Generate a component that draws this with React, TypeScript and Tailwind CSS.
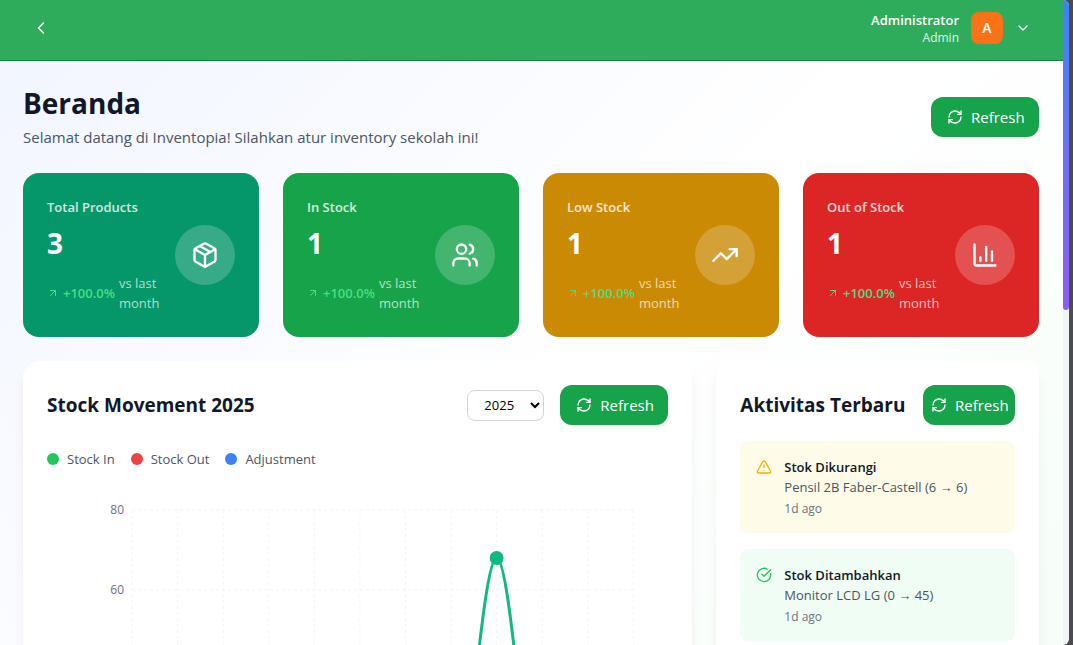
import React from "react";
import {
  ArrowUpRight,
  ChartColumn,
  ChevronDown,
  ChevronLeft,
  CircleCheckBig,
  Package,
  RefreshCw,
  TrendingUp,
  TriangleAlert,
  Users,
} from "lucide-react";

const stats = [
  { label: "Total Products", value: "3", color: "bg-[#059669]", Icon: Package },
  { label: "In Stock", value: "1", color: "bg-[#16a34a]", Icon: Users },
  { label: "Low Stock", value: "1", color: "bg-[#ca8a04]", Icon: TrendingUp },
  { label: "Out of Stock", value: "1", color: "bg-[#dc2626]", Icon: ChartColumn },
];

const legend = [
  { label: "Stock In", color: "bg-[#22c55e]" },
  { label: "Stock Out", color: "bg-[#ef4444]" },
  { label: "Adjustment", color: "bg-[#3b82f6]" },
];

const activities = [
  {
    title: "Stok Dikurangi",
    detail: "Pensil 2B Faber-Castell (6 → 6)",
    time: "1d ago",
    box: "bg-[#fefce8]",
    tint: "text-[#eab308]",
    Icon: TriangleAlert,
  },
  {
    title: "Stok Ditambahkan",
    detail: "Monitor LCD LG (0 → 45)",
    time: "1d ago",
    box: "bg-[#f0fdf4]",
    tint: "text-[#22c55e]",
    Icon: CircleCheckBig,
  },
];

function RefreshButton({ compact = false }: { compact?: boolean }) {
  return (
    <button
      type="button"
      className={`flex h-10 shrink-0 items-center gap-2 rounded-xl bg-[#16a34a] text-[15px] text-white ${
        compact ? "w-[92px] pl-2" : "w-[108px] pl-4"
      }`}
    >
      <RefreshCw className="size-4 shrink-0" />
      Refresh
    </button>
  );
}

function StockChart() {
  const months = Array.from({ length: 12 }, (_, i) => 85 + i * 45.55);
  const gridValues = [80, 60, 40, 20, 0];
  const labels = [80, 60];
  const y = (v: number) => 337 - v * 4;
  return (
    <svg viewBox="0 0 621 370" className="w-full" role="img" aria-label="Stock Movement">
      <g stroke="#f3f4f6" strokeDasharray="3 3">
        {gridValues.map((t) => (
          <line key={t} x1={85} x2={586} y1={y(t)} y2={y(t)} />
        ))}
        {months.map((x) => (
          <line key={x} x1={x} x2={x} y1={17} y2={337} />
        ))}
      </g>
      <g fill="#6b7280" fontSize={12} textAnchor="end">
        {labels.map((t) => (
          <text key={t} x={77} y={y(t) + 4}>
            {t}
          </text>
        ))}
      </g>
      <path
        d="M85 337H403.9C419 337 434.2 65 449.4 65C464.6 65 479.8 337 495 337H586"
        fill="none"
        stroke="#10b981"
        strokeWidth={3}
      />
      <circle cx={449.4} cy={65} r={7} fill="#10b981" />
    </svg>
  );
}

export default function App() {
  return (
    <div className="flex h-screen overflow-hidden bg-[#4b4c50] font-['Open_Sans','Noto_Sans',sans-serif] text-[#111827]">
      <div className="flex min-w-0 flex-1 overflow-hidden rounded-r-md bg-[#f1f5f9]">
        <div className="flex min-w-0 flex-1 flex-col overflow-hidden bg-[linear-gradient(135deg,#f1f5ff_0%,#ffffff_55%,#f0fdf4_130%)]">
          <header className="flex h-[61px] shrink-0 items-center justify-between border-b border-[#15803d] bg-[#2eac5c] pr-8 pl-[31px] text-white">
            <button type="button" aria-label="Back" className="-mt-1">
              <ChevronLeft className="size-5" />
            </button>
            <button type="button" className="-mt-1 flex items-center gap-3">
              <span className="flex flex-col items-end">
                <span className="text-[13px] leading-5 font-semibold">Administrator</span>
                <span className="text-xs leading-4 text-[#dcfce7]">Admin</span>
              </span>
              <span className="flex size-8 items-center justify-center rounded-lg bg-[#f97316] text-sm font-semibold">
                A
              </span>
              <ChevronDown className="size-4" />
            </button>
          </header>

          <main className="flex flex-col gap-6 pt-6 pr-6 pl-[23px]">
            <div className="flex items-center justify-between">
              <div>
                <h1 className="text-[28px] leading-9 font-bold">Beranda</h1>
                <p className="mt-1 text-[15px] leading-6 text-[#4b5563]">
                  Selamat datang di Inventopia! Silahkan atur inventory sekolah ini!
                </p>
              </div>
              <RefreshButton />
            </div>

            <section className="grid grid-cols-4 gap-6">
              {stats.map(({ label, value, color, Icon }) => (
                <article
                  key={label}
                  className={`flex items-center justify-between rounded-2xl p-6 text-white ${color}`}
                >
                  <div className="min-w-0">
                    <p className="text-[13px] leading-5 font-semibold text-white/80">{label}</p>
                    <p className="mt-2 text-[28px] leading-9 font-bold">{value}</p>
                    <div className="mt-3 flex items-center gap-1 text-[13px] leading-5">
                      <ArrowUpRight className="size-3 shrink-0 text-[#4ade80]" />
                      <span className="font-semibold text-[#4ade80]">+100.0%</span>
                      <span className="text-white/70">vs last month</span>
                    </div>
                  </div>
                  <div className="flex size-[60px] shrink-0 items-center justify-center rounded-full bg-white/20">
                    <Icon className="size-7" />
                  </div>
                </article>
              ))}
            </section>

            <div className="grid grid-cols-3 gap-6">
              <section className="col-span-2 rounded-2xl bg-white p-6 shadow-lg shadow-black/8">
                <div className="flex items-center justify-between">
                  <h2 className="text-[19px] leading-7 font-bold">Stock Movement 2025</h2>
                  <div className="flex items-center gap-4">
                    <select
                      aria-label="Year"
                      defaultValue="2025"
                      className="h-[31px] w-[77px] rounded-lg border border-[#d1d5db] bg-white pl-3 text-[13px] text-black"
                    >
                      <option>2025</option>
                      <option>2024</option>
                    </select>
                    <RefreshButton />
                  </div>
                </div>
                <ul className="mt-6 mb-6 flex gap-4">
                  {legend.map(({ label, color }) => (
                    <li key={label} className="flex items-center gap-2 text-[13px] leading-5 text-[#4b5563]">
                      <span className={`size-3 rounded-full ${color}`} />
                      {label}
                    </li>
                  ))}
                </ul>
                <StockChart />
              </section>

              <section className="rounded-2xl bg-white p-6 shadow-lg shadow-black/8">
                <div className="flex items-center justify-between">
                  <h2 className="text-[19px] leading-7 font-bold whitespace-nowrap">Aktivitas Terbaru</h2>
                  <RefreshButton compact />
                </div>
                <ul className="mt-4 flex flex-col gap-4">
                  {activities.map(({ title, detail, time, box, tint, Icon }) => (
                    <li key={title} className={`flex items-start gap-3 rounded-lg p-4 ${box}`}>
                      <Icon className={`mt-[2px] size-4 shrink-0 ${tint}`} />
                      <div>
                        <p className="text-[13px] leading-5 font-semibold">{title}</p>
                        <p className="text-[13px] leading-5 text-[#4b5563]">{detail}</p>
                        <p className="mt-1 text-xs leading-4 text-[#6b7280]">{time}</p>
                      </div>
                    </li>
                  ))}
                </ul>
              </section>
            </div>
          </main>
        </div>
        <div className="w-[6px] shrink-0">
          <div className="h-[48%] rounded-b-[3px] bg-linear-to-b from-[#3b82f6] to-[#8b5cf6]" />
        </div>
      </div>
      <div className="w-1 shrink-0" />
    </div>
  );
}
